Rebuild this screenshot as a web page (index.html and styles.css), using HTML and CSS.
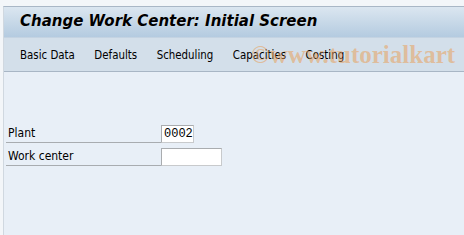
FILE: index.html
```html
<!DOCTYPE html>
<html>
<head>
<meta charset="utf-8">
<link rel="stylesheet" href="styles.css">
</head>
<body>
<div class="frame">
  <div class="title">Change Work Center: Initial Screen</div>
  <div class="toolbar">
    <span class="tb">Basic Data</span>
    <span class="tb">Defaults</span>
    <span class="tb">Scheduling</span>
    <span class="tb">Capacities</span>
    <span class="tb">Costing</span>
    <span class="watermark">©www.tutorialkart</span>
  </div>
  <div class="content">
    <div class="row">
      <span class="label">Plant</span>
      <span class="field short">0002</span>
    </div>
    <div class="row">
      <span class="label">Work center</span>
      <span class="field long"></span>
    </div>
  </div>
</div>
</body>
</html>
```

FILE: styles.css
```css
html, body {
  margin: 0;
  padding: 0;
}
body {
  width: 464px;
  height: 235px;
  overflow: hidden;
  background: #f3f6f9;
  font-family: "DejaVu Sans", Tahoma, sans-serif;
}
.frame {
  margin: 6px 0 0 3px;
  border-left: 1px solid #d0d8e0;
  border-top: 1px solid #a9b7c6;
  height: 228px;
  display: flex;
  flex-direction: column;
  background: #e8eff7;
}
.title {
  height: 30px;
  line-height: 29px;
  padding-left: 16px;
  background: linear-gradient(#dbe6f0, #b4cbe0);
  font-family: "DejaVu Sans", Verdana, sans-serif;
  font-weight: bold;
  font-style: italic;
  font-size: 15px;
  color: #000;
  text-shadow: 0 0 1px rgba(255,255,255,0.6);
  white-space: nowrap;
}
.toolbar {
  position: relative;
  height: 33px;
  background: #d3dfea;
  border-top: 1px solid #c4d3e2;
  border-bottom: 1px solid #a8b6c5;
  display: flex;
  align-items: center;
  padding-left: 16px;
  gap: 19.5px;
  font-family: "DejaVu Sans Condensed", "DejaVu Sans", sans-serif;
  font-size: 11.4px;
  color: #000;
  overflow: hidden;
}
.tb {
  white-space: nowrap;
}
.watermark {
  position: absolute;
  left: 247px;
  top: 3px;
  font-family: "Liberation Serif", serif;
  font-weight: bold;
  font-size: 25px;
  color: rgba(232, 160, 90, 0.55);
  white-space: nowrap;
  pointer-events: none;
}
.content {
  flex: 1;
  padding: 52px 0 0 2px;
  background: #e8eff7;
}
.row {
  display: flex;
  align-items: flex-end;
  height: 23px;
}
.row:first-child {
  height: 19px;
}
.label {
  width: 153px;
  padding-left: 2px;
  border-bottom: 1px solid #a8acb0;
  font-family: "DejaVu Sans Condensed", "DejaVu Sans", sans-serif;
  font-size: 12px;
  line-height: 18px;
  color: #000;
}
.field {
  box-sizing: border-box;
  height: 18px;
  background: #fff;
  border: 1px solid #a9acaf;
  border-right-color: #c8cacc;
  border-bottom-color: #c8cacc;
  font-family: "Liberation Mono", "DejaVu Sans Mono", monospace;
  font-size: 12px;
  line-height: 16px;
  padding-left: 2px;
}
.short { width: 33px; }
.long { width: 61px; }
```
